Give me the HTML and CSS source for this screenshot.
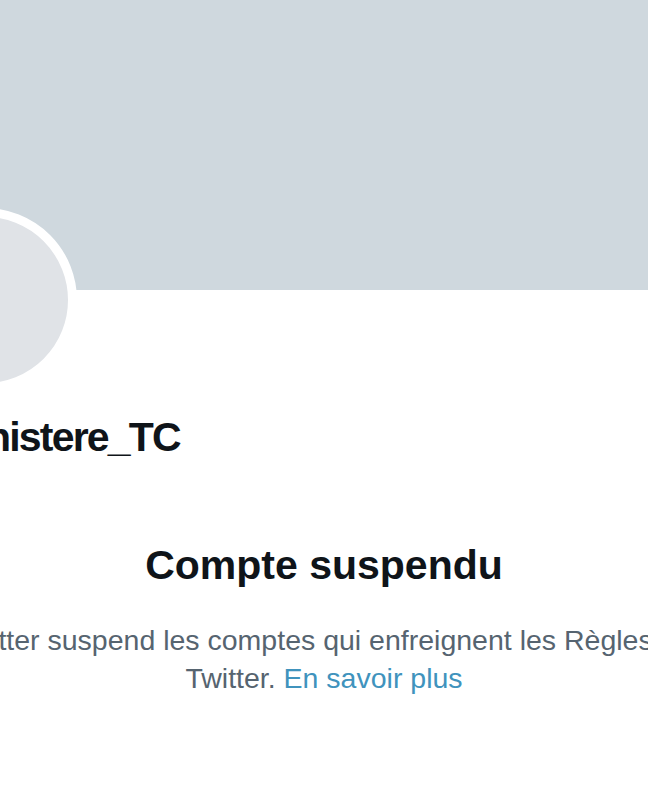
FILE: index.html
```html
<!DOCTYPE html>
<html lang="fr">
<head>
<meta charset="utf-8">
<title>Compte suspendu</title>
<link rel="stylesheet" href="styles.css">
</head>
<body>
<div class="page">
  <div class="banner"></div>
  <div class="profile">
    <div class="avatar"></div>
    <div class="name">Ministere_TC</div>
  </div>
  <div class="suspended">
    <h2 class="title">Compte suspendu</h2>
    <p class="message">Twitter suspend les comptes qui enfreignent les Règles de<br>Twitter. <a class="link" href="#">En savoir plus</a></p>
  </div>
</div>
</body>
</html>
```
FILE: styles.css
```css
html, body {
  margin: 0;
  padding: 0;
  background: #ffffff;
}
body {
  width: 648px;
  height: 800px;
  overflow: hidden;
  font-family: "Liberation Sans", Arial, sans-serif;
}
.page {
  width: 648px;
}
.banner {
  height: 290px;
  background: #cfd8de;
}
.profile {
  position: relative;
  padding-top: 123px;
}
.avatar {
  position: absolute;
  left: -107px;
  top: -82px;
  width: 184px;
  height: 184px;
  box-sizing: border-box;
  border-radius: 50%;
  border: 9px solid #ffffff;
  background: #e0e3e7;
}
.name {
  margin-left: -56px;
  font-size: 41px;
  line-height: 48px;
  font-weight: 700;
  letter-spacing: -1.8px;
  color: #0f1419;
  white-space: nowrap;
}
.suspended {
  margin: 80px -80px 0;
  text-align: center;
}
.title {
  margin: 0;
  font-size: 41px;
  line-height: 48px;
  font-weight: 700;
  color: #0f1419;
}
.message {
  margin: 32px 0 0;
  font-size: 28.5px;
  line-height: 38px;
  color: #566470;
  white-space: nowrap;
}
.link {
  color: #4093bd;
  text-decoration: none;
}
```
